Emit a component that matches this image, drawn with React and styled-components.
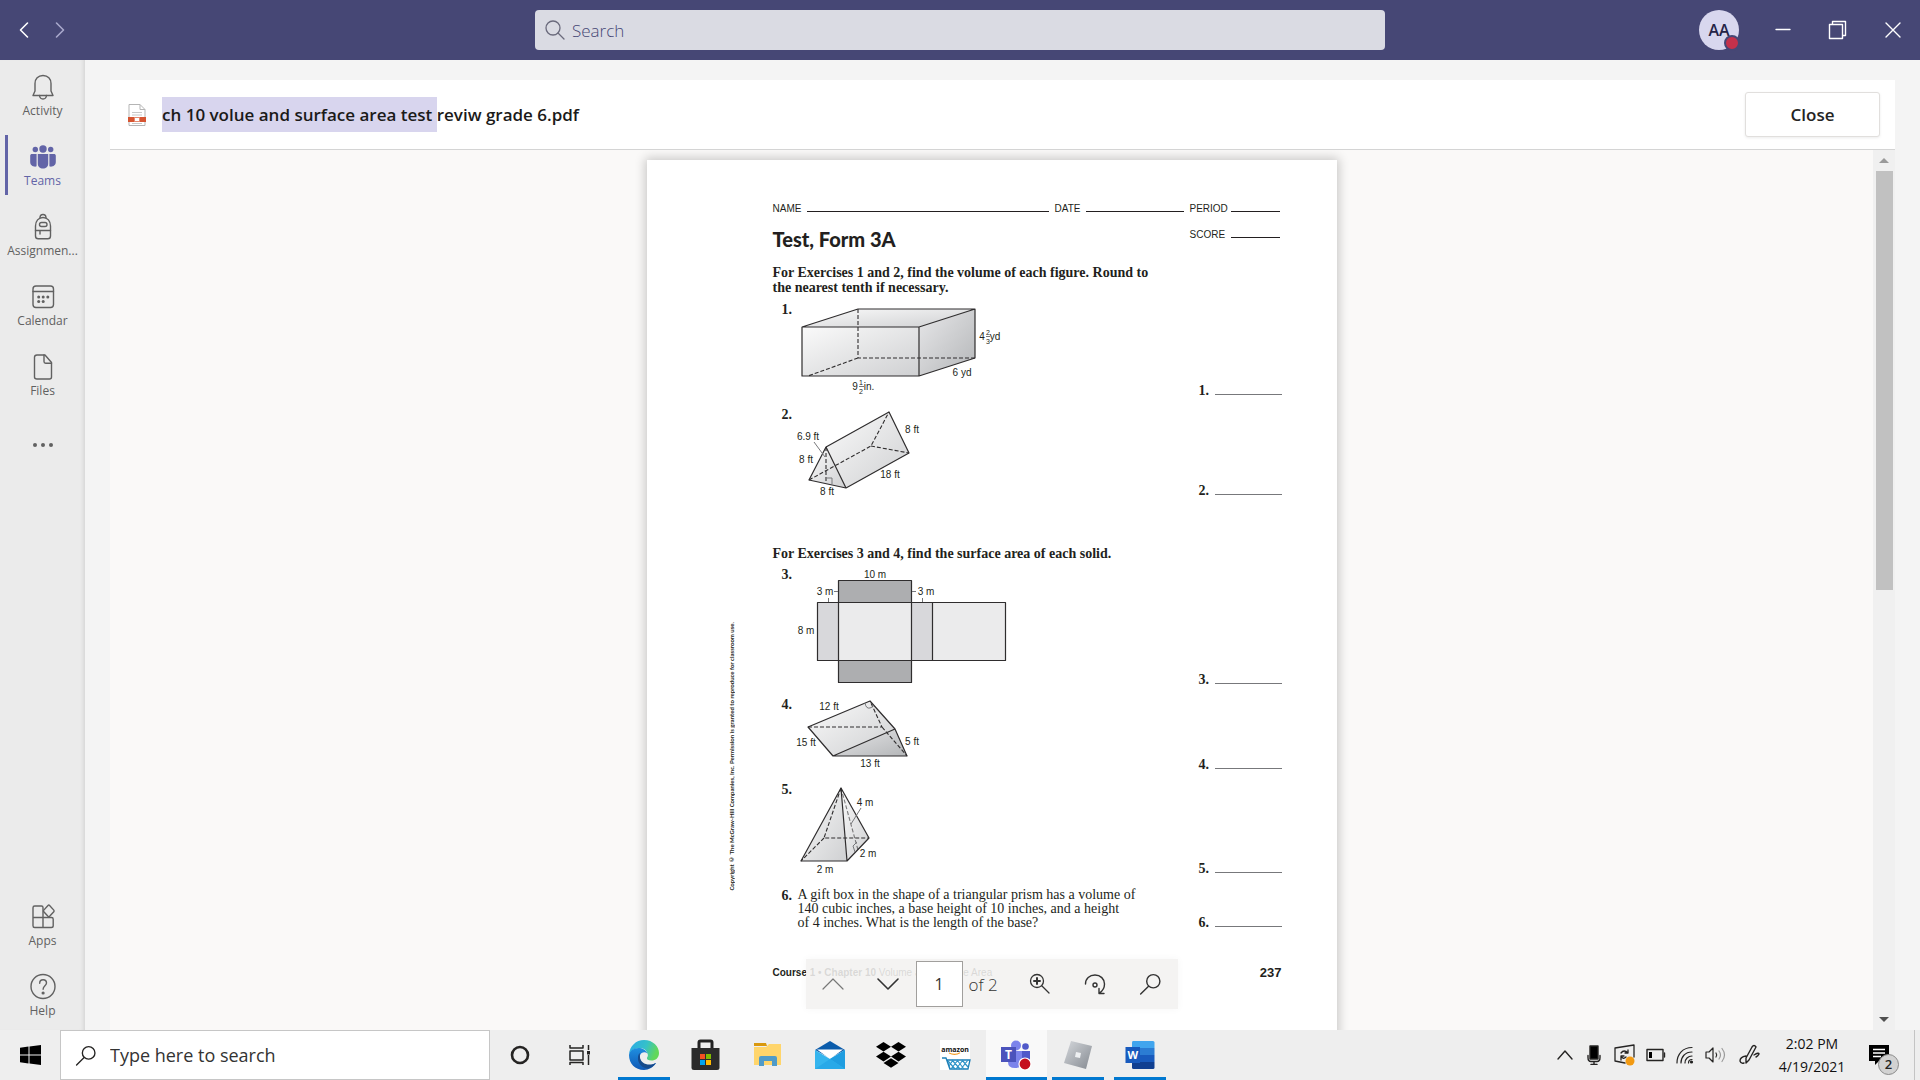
import React from "react";
import styled, { createGlobalStyle } from "styled-components";

const UI = `"Open Sans", "Noto Sans", sans-serif`;
const SERIF = `"Liberation Serif", serif`;
const SANS = `"Liberation Sans", sans-serif`;
const LATO = `Lato, "Liberation Sans", sans-serif`;

const Global = createGlobalStyle`
  *, *::before, *::after { box-sizing: border-box; }
  html, body, #root { height: 100%; }
  body { margin: 0; overflow: hidden; font-family: ${UI}; color: #252423; }
  button, input { font-family: inherit; color: inherit; }
  button { background: none; border: 0; padding: 0; margin: 0; }
  svg { display: block; flex: none; }
`;

const Screen = styled.div`
  height: 100vh;
  display: grid;
  grid-template-rows: 60px minmax(0, 1fr) 50px;
`;

/* ---------- title bar ---------- */
const TitleBar = styled.header`
  background: #464775;
  display: grid;
  grid-template-columns: 1fr minmax(200px, 850px) 1fr;
  align-items: center;
`;
const NavArrows = styled.div`
  display: flex;
  gap: 12px;
  padding-left: 12px;
`;
const IconButton = styled.button`
  display: flex;
  align-items: center;
  justify-content: center;
  width: ${(p) => p.$w || 24}px;
  height: ${(p) => p.$h || 32}px;
  color: ${(p) => p.$color || "inherit"};
`;
const TopSearch = styled.label`
  height: 40px;
  border-radius: 4px;
  background: #dadbe3;
  display: flex;
  align-items: center;
  gap: 7px;
  padding: 0 11px 0 10px;
  color: #6a6a7c;
`;
const TopSearchInput = styled.input`
  flex: 1;
  min-width: 0;
  border: 0;
  outline: 0;
  background: transparent;
  font-size: 17px;
  font-weight: 300;
  padding: 0;
  &::placeholder { color: #464775; opacity: 1; }
`;
const WindowTools = styled.div`
  display: flex;
  justify-content: flex-end;
  align-items: center;
  gap: 23px;
  padding-right: 11px;
`;
const Avatar = styled.button`
  position: relative;
  width: 40px;
  height: 40px;
  border-radius: 50%;
  background: #d8d7ee;
  color: #252447;
  font-size: 16px;
  font-weight: 600;
  margin-right: 5px;
`;
const Presence = styled.span`
  position: absolute;
  right: -1px;
  bottom: -1px;
  width: 16px;
  height: 16px;
  border-radius: 50%;
  background: #c4314b;
  border: 2px solid #464775;
`;

/* ---------- middle ---------- */
const Middle = styled.div`
  display: grid;
  grid-template-columns: 85px minmax(0, 1fr);
  min-height: 0;
`;
const Rail = styled.nav`
  background: #ebebeb;
  box-shadow: inset -4px 0 4px -3px #cfcfcf;
  display: flex;
  flex-direction: column;
`;
const RailItem = styled.button`
  position: relative;
  height: 70px;
  width: 100%;
  padding-top: 13px;
  display: flex;
  flex-direction: column;
  align-items: center;
  font-size: 12px;
  line-height: 20px;
  color: ${(p) => (p.$active ? "#6264a7" : "#616161")};
  margin-top: ${(p) => (p.$push ? "auto" : "0")};
  &::before {
    content: "";
    display: ${(p) => (p.$active ? "block" : "none")};
    position: absolute;
    left: 5px;
    top: 5px;
    bottom: 5px;
    width: 3px;
    background: #6264a7;
  }
`;
const More = styled(RailItem)`
  padding-top: 21px;
`;
const Content = styled.main`
  background: #f4f4f4;
  padding: 20px 25px 0;
  display: flex;
  min-height: 0;
`;
const Panel = styled.section`
  flex: 1;
  min-width: 0;
  display: flex;
  flex-direction: column;
  background: #faf9f8;
`;
const FileBar = styled.div`
  height: 70px;
  flex: none;
  background: #fff;
  border-bottom: 1px solid #d4d4d4;
  display: flex;
  align-items: center;
  padding: 0 15px 0 18px;
`;
const FileName = styled.h1`
  margin: 0 auto 0 16px;
  font-size: 17px;
  font-weight: 600;
  line-height: 35px;
  white-space: pre;
  color: #1b1a19;
`;
const Mark = styled.mark`
  display: inline-block;
  background: #d8d5ee;
  color: inherit;
`;
const CloseButton = styled.button`
  width: 135px;
  height: 45px;
  border: 1px solid #e1dfdd;
  border-radius: 3px;
  box-shadow: 0 1px 3px rgba(0, 0, 0, 0.08);
  background: #fff;
  font-size: 17px;
  font-weight: 600;
  color: #252423;
`;
const Viewer = styled.div`
  position: relative;
  flex: 1;
  min-height: 0;
  display: flex;
`;
const Canvas = styled.div`
  flex: 1;
  overflow: hidden;
  display: flex;
  justify-content: center;
  padding-top: 10px;
`;
const Scrollbar = styled.div`
  width: 22px;
  background: #f0f0f0;
  display: flex;
  flex-direction: column;
  align-items: center;
`;
const ScrollArrow = styled.button`
  height: 21px;
  width: 100%;
  flex: none;
  display: flex;
  align-items: center;
  justify-content: center;
`;
const Track = styled.div`
  flex: 1;
  width: 17px;
`;
const Thumb = styled.div`
  height: 50%;
  background: #c1c1c1;
`;

/* ---------- the document ---------- */
const Sheet = styled.article`
  width: 690px;
  min-height: 900px;
  flex: none;
  background: #fff;
  box-shadow: 0 0 10px 2px rgba(0, 0, 0, 0.2);
  display: grid;
  grid-template-columns: 46px 509px;
  padding: 41px 0 0 80px;
  color: #231f20;
  align-items: start;
`;
const Copyright = styled.p`
  margin: 421px 0 0;
  writing-mode: vertical-rl;
  transform: rotate(180deg);
  font: bold 6px/10px ${LATO};
  white-space: nowrap;
  justify-self: start;
`;
const FormRow = styled.div`
  display: flex;
  justify-content: space-between;
  align-items: baseline;
  margin-top: ${(p) => p.$top || 0}px;
  padding-right: 2px;
`;
const Field = styled.span`
  display: flex;
  align-items: baseline;
  justify-content: space-between;
  width: ${(p) => p.$w}px;
  font: 10px/16px ${SANS};
`;
const Blank = styled.span`
  width: ${(p) => p.$w}px;
  height: 1px;
  background: ${(p) => (p.$soft ? "#77787b" : "#231f20")};
`;
const TestTitle = styled.h2`
  margin: 0;
  font: 900 20px/24px ${LATO};
`;
const TitleRow = styled(FormRow)`
  align-items: flex-start;
`;
const Directions = styled.h3`
  margin: ${(p) => p.$top}px 0 0;
  font: bold 14px/15px ${SERIF};
`;
const Exercise = styled.div`
  display: grid;
  grid-template-columns: 25px 1fr 83px;
  margin-top: ${(p) => p.$top}px;
`;
const Num = styled.b`
  font: bold 14px/15px ${SERIF};
  padding-left: ${(p) => p.$pad || 0}px;
`;
const Answer = styled.div`
  align-self: end;
  display: flex;
  align-items: baseline;
  justify-content: space-between;
`;
const Problem = styled.p`
  margin: 0;
  font: 14px/14px ${SERIF};
  white-space: nowrap;
`;
const Figure = styled.svg`
  overflow: visible;
  text { font: 10px ${SANS}; fill: #231f20; text-anchor: middle; }
  .frac { font-size: 7px; }
  .line { fill: none; stroke: #2f2d2e; stroke-width: 1.2; stroke-linejoin: round; }
  .dash { fill: none; stroke: #2f2d2e; stroke-width: 1.1; stroke-dasharray: 4 2; }
  .thin { fill: none; stroke: #77787b; stroke-width: 1; }
`;
const PageFooter = styled.div`
  display: flex;
  justify-content: space-between;
  margin-top: 35px;
  font: bold 10px/15px ${SANS};
`;
const Regular = styled.span`
  font-weight: 400;
`;
const PageNo = styled.span`
  font-size: 13px;
`;

/* ---------- floating pager ---------- */
const Pager = styled.div`
  position: absolute;
  left: calc(50% - 197px);
  bottom: 21px;
  width: 372px;
  height: 50px;
  background: rgba(242, 241, 240, 0.88);
  box-shadow: 0 0 8px rgba(0, 0, 0, 0.04);
  display: flex;
  align-items: center;
  color: #333;
`;
const PageInput = styled.input`
  width: 47px;
  height: 46px;
  margin-right: 6px;
  border: 1px solid #a19f9d;
  background: #fff;
  text-align: center;
  font-size: 16px;
  padding: 0;
`;
const PageCount = styled.span`
  font-size: 17px;
  font-weight: 300;
  width: 43px;
  white-space: nowrap;
`;

/* ---------- task bar ---------- */
const TaskBar = styled.footer`
  background: #eee;
  display: flex;
  align-items: stretch;
`;
const Start = styled(IconButton)`
  width: 60px;
  height: 50px;
`;
const TaskSearch = styled.label`
  width: 430px;
  background: #fff;
  border: 1px solid #c6c6c6;
  display: flex;
  align-items: center;
  gap: 14px;
  padding: 0 14px;
`;
const TaskSearchInput = styled.input`
  flex: 1;
  min-width: 0;
  border: 0;
  outline: 0;
  padding: 0;
  background: transparent;
  font-size: 18px;
  &::placeholder { color: #333; opacity: 1; }
`;
const Task = styled.button`
  width: ${(p) => p.$w || 62}px;
  display: flex;
  align-items: center;
  justify-content: center;
  background: linear-gradient(#0078d0, #0078d0) center bottom / ${(p) => (p.$open ? "52px" : p.$active ? "100%" : "0")} 3px no-repeat,
    ${(p) => (p.$active ? "#f9f9f9" : "transparent")};
`;
const Tray = styled.div`
  margin-left: auto;
  display: flex;
  align-items: center;
`;
const Clock = styled.button`
  width: 88px;
  font-size: 14px;
  line-height: 23px;
  text-align: center;
  color: #111;
`;
const Notices = styled.button`
  position: relative;
  width: 59px;
  height: 50px;
  margin-right: 5px;
  padding-left: 13px;
  display: flex;
  align-items: center;
  border-right: 1px solid #c4c4c4;
`;
const Count = styled.span`
  position: absolute;
  left: 22px;
  top: 24px;
  width: 21px;
  height: 21px;
  border-radius: 50%;
  background: #d2d2d2;
  border: 1px solid #8a8a8a;
  font-size: 13px;
  font-weight: 600;
  line-height: 18px;
  text-align: center;
`;

const Stroke = ({ w = 24, h = 24, sw = 1.4, box, children, ...rest }) => (
  <svg width={w} height={h} viewBox={box || `0 0 ${w} ${h}`} fill="none" stroke="currentColor"
    strokeWidth={sw} strokeLinecap="round" strokeLinejoin="round" aria-hidden="true" {...rest}>
    {children}
  </svg>
);

const railIcons = {
  Activity: (
    <Stroke w={28} h={28}>
      <path d="M14 2.500c-5 0-8 3.500-8 8V18l-2 4.500h20L22 18v-7.500c0-4.500-3-8-8-8z" />
      <path d="M10.500 22.500c.3 2.500 1.500 3.500 3.500 3.500s3.200-1 3.500-3.500" />
    </Stroke>
  ),
  Teams: (
    <svg width="28" height="28" viewBox="0 0 28 28" fill="currentColor" aria-hidden="true">
      <circle cx="14" cy="6" r="3.700" /><circle cx="6.300" cy="6.500" r="2.700" /><circle cx="21.700" cy="6.500" r="2.700" />
      <path d="M8.800 11h10.400v9.500c0 3.200-2.200 5-5.200 5s-5.200-1.800-5.200-5z" />
      <path d="M7.600 11H3c-1 0-1.800.7-1.800 1.700V19c0 3 2.500 5 5.900 4.600.6 0 .5-1 .5-2z" />
      <path d="M20.400 11H25c1 0 1.800.7 1.800 1.700V19c0 3-2.500 5-5.900 4.600-.6 0-.5-1-.5-2z" />
    </svg>
  ),
  "Assignmen...": (
    <Stroke w={28} h={28}>
      <path d="M11 5c0-2 1-3.500 3-3.500S17 3 17 5" />
      <path d="M6.500 13c0-5 3-8.500 7.500-8.500s7.500 3.500 7.500 8.500v10c0 1.700-1 2.800-2.700 2.800H9.200c-1.700 0-2.700-1.100-2.700-2.800z" />
      <rect x="10.500" y="9.500" width="7.500" height="4" rx="2" />
      <path d="M6.500 17.500h15M11 17.500v3.500" />
    </Stroke>
  ),
  Calendar: (
    <Stroke w={28} h={28}>
      <rect x="4" y="3" width="20.500" height="21.500" rx="3" /><path d="M4 8.500h20.500" />
      <g fill="currentColor" stroke="none">
        <circle cx="9.700" cy="14" r="1.500" /><circle cx="14.200" cy="14" r="1.500" /><circle cx="18.800" cy="14" r="1.500" />
        <circle cx="9.700" cy="18.500" r="1.500" /><circle cx="14.200" cy="18.500" r="1.500" />
      </g>
    </Stroke>
  ),
  Files: (
    <Stroke w={28} h={28}>
      <path d="M8 2h8l6.500 7.500V24c0 1.300-.8 2-2 2H8c-1.500 0-2.500-.8-2.500-2V4.200C5.500 2.800 6.500 2 8 2z" />
      <path d="M15 2v6.500c0 1 .6 1.700 1.600 1.700h5.900" />
    </Stroke>
  ),
  Apps: (
    <Stroke w={28} h={28}>
      <path d="M14 14.500V4.500c0-1-.5-1.500-1.500-1.500H5.700C4.700 3 4 3.600 4 4.700v18c0 1 .7 1.800 1.700 1.800h16.600c1.200 0 1.900-.7 1.900-1.800v-6.500c0-1-.7-1.700-1.700-1.700H4M14 14.500v10" />
      <path d="M19 2.500q.8-.8 1.600 0l4.200 4.600q.7.800 0 1.600l-4.200 4.600q-.8.800-1.600 0l-4.200-4.600q-.7-.8 0-1.600z" />
    </Stroke>
  ),
  Help: (
    <Stroke w={28} h={28}>
      <circle cx="14" cy="13.500" r="12" />
      <path d="M10.700 10.300c0-2.200 1.400-3.500 3.400-3.500s3.400 1.300 3.400 3.200c0 2.700-3.400 3-3.400 6.300" />
      <circle cx="14.100" cy="20" r=".9" fill="currentColor" />
    </Stroke>
  ),
};

const EdgeIcon = () => (
  <svg width="32" height="32" viewBox="0 0 32 32" aria-hidden="true">
    <defs>
      <linearGradient id="eg1" x1="0" y1="0" x2="1" y2=".3"><stop offset="0" stopColor="#2aa8e8" /><stop offset=".6" stopColor="#35c1c9" /><stop offset="1" stopColor="#62d85a" /></linearGradient>
      <linearGradient id="eg2" x1="0" y1="0" x2="0" y2="1"><stop offset="0" stopColor="#1f8fe0" /><stop offset="1" stopColor="#0f58b5" /></linearGradient>
    </defs>
    <path d="M1 16C1.500 7 8 1 16 1c9 0 15 6.500 15 13 0 5-3.500 7.500-7.500 7.500-3.500 0-5-1.500-4.500-2.800 1.200-1.500 1-3 .5-4.200C18 10 14 8.500 10.500 9 5 9.700 1.500 13 1 16z" fill="url(#eg1)" />
    <path d="M1 16c.5-4 4.500-7 9.500-7 4 0 7.500 2 9 5.500-2.500-2.200-6.500-1.500-7.500 2-1.200 6 5 11.500 11 9.500 3-1 4.500-2.500 5-2-2.500 4-7 7-12 7C7 31 1 24.500 1 16z" fill="url(#eg2)" />
    <path d="M11.500 14c-3 4-2 12 5.500 15 4 1.500 8-1 11-5-8 4-15.500 0-16-5.500-.2-2 0-3.500-.5-4.500z" fill="#164a8c" />
  </svg>
);
const StoreIcon = () => (
  <svg width="32" height="32" viewBox="0 0 32 32" aria-hidden="true">
    <path d="M9 10V3.500Q9 2 10.500 2h10Q22 2 22 3.500V10" fill="none" stroke="#222" strokeWidth="3" />
    <path d="M1.500 9h28v19.500q0 2.500-2.500 2.500H4q-2.500 0-2.500-2.500z" fill="#2b2b2b" />
    <path d="M10 15h5v5h-5z" fill="#f25022" /><path d="M16 15h5v5h-5z" fill="#7fba00" />
    <path d="M10 21h5v5h-5z" fill="#00a4ef" /><path d="M16 21h5v5h-5z" fill="#ffb900" />
  </svg>
);
const FolderIcon = () => (
  <svg width="32" height="32" viewBox="0 0 32 32" aria-hidden="true">
    <path d="M3 4h12l1 3H3z" fill="#d9980e" /><path d="M3 8h12l3-3h12v21H3z" fill="#ffd56b" />
    <path d="M8 27v-8q0-2 2-2h14q2 0 2 2v8h-5v-5h-8v5z" fill="#4f9bc9" />
  </svg>
);
const MailIcon = () => (
  <svg width="32" height="32" viewBox="0 0 32 32" aria-hidden="true">
    <path d="M1 11 16 2l15 9-15 8z" fill="#0b5cab" /><path d="M3 10.500h26L16 20z" fill="#fff" />
    <path d="M1 11l15 9 15-9v19H1z" fill="#35b5ee" /><path d="M31 11v19L16 20z" fill="#1f9de0" /><path d="M1 30l15-10 15 10z" fill="#28a9e8" />
  </svg>
);
const DropboxIcon = () => (
  <svg width="32" height="28" viewBox="0 0 32 28" aria-hidden="true">
    <path d="M8.500 1 16 5.800 8.500 10.600 1 5.800zM23.500 1 31 5.800l-7.500 4.800L16 5.800zM8.500 10.800l7.500 4.800-7.500 4.800L1 15.600zM23.500 10.800l7.500 4.800-7.500 4.800-7.500-4.800zM16 17.200l7.500 4.800L16 26.800 8.500 22z" />
  </svg>
);
const AmazonIcon = () => (
  <svg width="32" height="32" viewBox="0 0 32 32" aria-hidden="true">
    <path d="M1 1h30v30H1z" fill="#fff" />
    <text x="16" y="12.500" textAnchor="middle" fontFamily="Open Sans, sans-serif" fontWeight="700" fontSize="7" fill="#111">amazon</text>
    <path d="M10 14q6 3 11-.3" fill="none" stroke="#f59b23" strokeWidth="1.200" />
    <path d="M3 19h4l4 11.500M8 21h23l-2 9H11z" fill="none" stroke="#1b7fb8" strokeWidth="1.300" />
    <path d="M9 22l7 8M13 21l8 9M18 21l7 9M23 21l6 7M14 21l-4 6M19 21l-7 9M24 21l-7 9M29 21l-7 9" stroke="#2d93c8" strokeWidth="1.200" />
  </svg>
);
const TeamsIcon = () => (
  <svg width="34" height="32" viewBox="2 0 34 32" aria-hidden="true">
    <circle cx="18" cy="6.500" r="5" fill="#7b83eb" /><circle cx="27.500" cy="7.500" r="3.300" fill="#5059c9" />
    <path d="M22 12h10v9q0 5-5 5-5 0-5-5z" fill="#5059c9" /><path d="M10 12h14v11q0 6-7 6-7 0-7-6z" fill="#7b83eb" />
    <path d="M3 8h15v15H3z" fill="#4b53bc" />
    <text x="10.500" y="20" textAnchor="middle" fontFamily="Open Sans, sans-serif" fontWeight="700" fontSize="12" fill="#fff">T</text>
    <circle cx="27" cy="25" r="6" fill="#c50f1f" stroke="#fff" strokeWidth="1.200" />
  </svg>
);
const RobloxIcon = () => (
  <svg width="32" height="32" viewBox="0 0 32 32" aria-hidden="true">
    <defs><linearGradient id="rb" x1="0" y1="0" x2="1" y2="1"><stop offset="0" stopColor="#d5d8dc" /><stop offset="1" stopColor="#858a91" /></linearGradient></defs>
    <path d="M9 2l21 5-6 23-22-6z" fill="url(#rb)" /><path d="M14 13l5 1-1 5-5-1z" fill="#eef0f2" />
  </svg>
);
const WordIcon = () => (
  <svg width="32" height="32" viewBox="0 0 32 32" aria-hidden="true">
    <path d="M9 2h20q1.500 0 1.500 1.500V9H8V3.500Q8 2 9 2z" fill="#41a5ee" /><path d="M8 9h22.500v7H8z" fill="#2b7cd3" />
    <path d="M8 16h22.500v7H8z" fill="#185abd" /><path d="M8 23h22.500v5.500Q30.500 30 29 30H9.500Q8 30 8 28.500z" fill="#103f91" />
    <path d="M1.500 8H16v16H1.500z" fill="#185abd" />
    <text x="8.700" y="20" textAnchor="middle" fontFamily="Open Sans, sans-serif" fontWeight="700" fontSize="11" fill="#fff">W</text>
  </svg>
);

const Magnifier = ({ size = 20, flip }) => (
  <Stroke w={size} h={size} box="0 0 20 20" sw={1.3}>
    {flip ? <><circle cx="13" cy="7.500" r="6" /><path d="M8.700 12 1.500 19" /></> : <><circle cx="8" cy="8" r="7" /><path d="m13 13 6 6" /></>}
  </Stroke>
);

const ExerciseRow = ({ n, top, children }) => (
  <Exercise $top={top}>
    <Num $pad={9}>{n}.</Num>
    {children}
    <Answer><Num>{n}.</Num><Blank $w={67} $soft /></Answer>
  </Exercise>
);

const Worksheet = () => (
  <Sheet>
    <Copyright>Copyright © The McGraw-Hill Companies, Inc. Permission is granted to reproduce for classroom use.</Copyright>
    <div>
      <FormRow>
        <Field $w={276}>NAME<Blank $w={242} /></Field>
        <Field $w={129}>DATE<Blank $w={98} /></Field>
        <Field $w={90}>PERIOD<Blank $w={49} /></Field>
      </FormRow>
      <TitleRow $top={10}>
        <TestTitle>Test, Form 3A</TestTitle>
        <Field $w={90}>SCORE<Blank $w={49} /></Field>
      </TitleRow>
      <Directions $top={14}>For Exercises 1 and 2, find the volume of each figure. Round to<br />the nearest tenth if necessary.</Directions>

      <ExerciseRow n={1} top={7}>
        <Figure width="212" height="96" viewBox="798 302 212 96">
          <defs>
            <linearGradient id="f1" x1="0" y1="0" x2="1" y2="1"><stop offset="0" stopColor="#fafafa" /><stop offset="1" stopColor="#cfd0d2" /></linearGradient>
            <linearGradient id="f2" x1="0" y1="0" x2="1" y2="1"><stop offset="0" stopColor="#e8e8ea" /><stop offset="1" stopColor="#b4b6b8" /></linearGradient>
          </defs>
          <path d="M802 327 858 309H975L919 327z" fill="url(#f1)" /><path d="M802 327H919V376H802z" fill="url(#f1)" />
          <path d="M919 327 975 309V358L919 376z" fill="url(#f2)" />
          <path className="line" d="M802 327H919V376H802zM802 327 858 309H975L919 327M975 309V358L919 376" />
          <path className="dash" d="M858 309V358H975M858 358 808 376" />
          <text x="855" y="390">9</text><text className="frac" x="861" y="385">1</text><text className="frac" x="861" y="394">2</text>
          <path className="thin" d="M859 386.500h5" /><text x="869" y="390">in.</text>
          <text x="962" y="376">6 yd</text>
          <text x="982" y="340">4</text><text className="frac" x="988" y="335">2</text><text className="frac" x="988" y="344">3</text>
          <path className="thin" d="M986 336.500h4" /><text x="995" y="340">yd</text>
        </Figure>
      </ExerciseRow>

      <ExerciseRow n={2} top={9}>
        <Figure width="212" height="91" viewBox="798 407 212 91">
          <path d="M826 447 889 412 909 453 846 488z" fill="url(#f1)" /><path d="M826 447 809 480 846 488z" fill="url(#f1)" />
          <path className="line" d="M826 447 809 480 846 488zM826 447 889 412 909 453 846 488" />
          <path className="dash" d="M809 480 871 446 889 412M871 446 909 453M826 447V483" />
          <path className="thin" d="M814 442 825 457M827 478h5v6" />
          <text x="808" y="440">6.9 ft</text><text x="806" y="463">8 ft</text><text x="912" y="433">8 ft</text>
          <text x="890" y="478">18 ft</text><text x="827" y="495">8 ft</text>
        </Figure>
      </ExerciseRow>

      <Directions $top={48}>For Exercises 3 and 4, find the surface area of each solid.</Directions>

      <ExerciseRow n={3} top={6}>
        <Figure width="212" height="120" viewBox="798 567 212 120">
          <path d="M838.500 580.500h73v102h-73z" fill="#adaeb0" />
          <path d="M817.500 602.500h115v58h-115z" fill="#d8d8db" />
          <path d="M838.500 602.500h73v58h-73zM932.500 602.500h73v58h-73z" fill="#ebebec" />
          <path className="line" d="M838.500 580.500h73v102h-73zM817.500 602.500h188v58h-188zM932.500 602.500v58" />
          <path className="thin" d="M834 591.500h4M912 591.500h4M828.500 598v4M922.500 598v4" />
          <text x="875" y="578">10 m</text><text x="825" y="595">3 m</text><text x="926" y="595">3 m</text><text x="806" y="634">8 m</text>
        </Figure>
      </ExerciseRow>

      <ExerciseRow n={4} top={10}>
        <Figure width="212" height="75" viewBox="798 697 212 75">
          <path d="M870 701 808 727 833 756 895 729z" fill="url(#f1)" /><path d="M895 729 907 756H833z" fill="url(#f2)" />
          <path className="line" d="M870 701 808 727 833 756H907L895 729zM833 756 895 729" />
          <path className="dash" d="M808 727H882L870 701M882 727 907 756" />
          <path className="thin" d="M865 703q1 6 5 5t3-3" />
          <text x="829" y="710">12 ft</text><text x="806" y="746">15 ft</text><text x="912" y="745">5 ft</text><text x="870" y="767">13 ft</text>
        </Figure>
      </ExerciseRow>

      <ExerciseRow n={5} top={10}>
        <Figure width="212" height="94" viewBox="798 782 212 94">
          <path d="M841 788 801 861H847z" fill="url(#f1)" /><path d="M841 788 847 861 869 838z" fill="url(#f1)" />
          <path className="line" d="M841 788 801 861H847L869 838zM841 788 847 861" />
          <path className="dash" d="M841 788 824 838H869M824 838 801 861" />
          <path className="dash" d="M841 788 858 850" opacity=".6" />
          <path className="thin" d="M861 808 851 824M855 852l-2-6 4-4" />
          <text x="865" y="806">4 m</text><text x="868" y="857">2 m</text><text x="825" y="873">2 m</text>
        </Figure>
      </ExerciseRow>

      <ExerciseRow n={6} top={12}>
        <Problem>A gift box in the shape of a triangular prism has a volume of<br />140 cubic inches, a base height of 10 inches, and a height<br />of 4 inches. What is the length of the base?</Problem>
      </ExerciseRow>

      <PageFooter>
        <span>Course 1 • Chapter 10 <Regular>Volume and Surface Area</Regular></span>
        <PageNo>237</PageNo>
      </PageFooter>
    </div>
  </Sheet>
);

export default function App() {
  return (
    <Screen>
      <Global />
      <TitleBar>
        <NavArrows>
          <IconButton aria-label="Back" $color="#fff"><Stroke w={10} h={18} sw={1.6}><path d="M8.500 2 1.500 9l7 7" /></Stroke></IconButton>
          <IconButton aria-label="Forward" $color="#a9a9cc"><Stroke w={10} h={18} sw={1.6}><path d="m1.500 2 7 7-7 7" /></Stroke></IconButton>
        </NavArrows>
        <TopSearch>
          <Magnifier />
          <TopSearchInput aria-label="Search" placeholder="Search" />
        </TopSearch>
        <WindowTools>
          <Avatar aria-label="Account">AA<Presence /></Avatar>
          <IconButton aria-label="Minimize" $w={32} $color="#fff"><Stroke w={16} h={16}><path d="M1 7.500h14" /></Stroke></IconButton>
          <IconButton aria-label="Restore" $w={32} $color="#fff"><Stroke w={20} h={20}><path d="M1.500 4.500h13v14h-13zM4.500 4V1.500h13v14H15" /></Stroke></IconButton>
          <IconButton aria-label="Close window" $w={32} $color="#fff"><Stroke w={16} h={16}><path d="m1 1 14 14M15 1 1 15" /></Stroke></IconButton>
        </WindowTools>
      </TitleBar>

      <Middle>
        <Rail>
          {["Activity", "Teams", "Assignmen...", "Calendar", "Files"].map((name) => (
            <RailItem key={name} $active={name === "Teams"}>{railIcons[name]}{name}</RailItem>
          ))}
          <More aria-label="More apps">
            <svg width="28" height="28" viewBox="0 0 28 28" fill="currentColor" aria-hidden="true"><circle cx="6" cy="14" r="2" /><circle cx="14" cy="14" r="2" /><circle cx="22" cy="14" r="2" /></svg>
          </More>
          <RailItem $push>{railIcons.Apps}Apps</RailItem>
          <RailItem>{railIcons.Help}Help</RailItem>
        </Rail>

        <Content>
          <Panel>
            <FileBar>
              <svg width="18" height="22" viewBox="0 0 18 22" aria-hidden="true">
                <path d="M1 .5h11l5 5v16H1z" fill="#fff" stroke="#b5b5b5" /><path d="M12 .5v5h5" fill="none" stroke="#b5b5b5" />
                <path d="M4 8.500h10M4 11h10M4 19.500h10" stroke="#c8c8c8" /><path d="M0 13h18v5H0z" fill="#d65532" />
                <path d="M6.500 13.500h5v4h-5z" fill="#fff" stroke="#e58a70" />
              </svg>
              <FileName><Mark>ch 10 volue and surface area test </Mark>reviw grade 6.pdf</FileName>
              <CloseButton>Close</CloseButton>
            </FileBar>
            <Viewer>
              <Canvas><Worksheet /></Canvas>
              <Scrollbar>
                <ScrollArrow aria-label="Scroll up"><svg width="10" height="5" viewBox="0 0 10 5"><path d="M0 5 5 0l5 5z" fill="#9a9a9a" /></svg></ScrollArrow>
                <Track><Thumb /></Track>
                <ScrollArrow aria-label="Scroll down"><svg width="10" height="5" viewBox="0 0 10 5"><path d="M0 0h10L5 5z" fill="#505050" /></svg></ScrollArrow>
              </Scrollbar>
              <Pager>
                <IconButton aria-label="Previous page" $w={55} $color="#777"><Stroke w={22} h={12} sw={1.2}><path d="m1 11 10-10 10 10" /></Stroke></IconButton>
                <IconButton aria-label="Next page" $w={55}><Stroke w={22} h={12} sw={1.6}><path d="m1 1 10 10L21 1" /></Stroke></IconButton>
                <PageInput aria-label="Page" defaultValue="1" />
                <PageCount>of 2</PageCount>
                <IconButton aria-label="Zoom" $w={56}><Stroke w={22} h={22} sw={1.3}><circle cx="8" cy="8" r="6.500" /><path d="m13 13 7 7" /><path d="M8 5v6M5 8h6" strokeWidth="2" /></Stroke></IconButton>
                <IconButton aria-label="Rotate" $w={55}><Stroke w={22} h={22} sw={1.4}><path d="M1.500 11C1.500 5.500 5.500 2 11 2s9.500 4 9.500 9c0 4-2 7-5 9M15 15.500V20.500h5" /><circle cx="11" cy="12" r="2" /></Stroke></IconButton>
                <IconButton aria-label="Find" $w={55}><Magnifier size={22} flip /></IconButton>
              </Pager>
            </Viewer>
          </Panel>
        </Content>
      </Middle>

      <TaskBar>
        <Start aria-label="Start"><svg width="21" height="20" viewBox="0 0 21 20"><path d="M0 2.800 8.500 1.600v8H0zM9.500 1.500 21 0v9.600H9.500zM0 10.500h8.500v8L0 17.300zM9.500 10.500H21V20L9.500 18.500z" /></svg></Start>
        <TaskSearch>
          <Magnifier size={21} flip />
          <TaskSearchInput aria-label="Type here to search" placeholder="Type here to search" />
        </TaskSearch>
        <Task aria-label="Cortana" $w={60}><Stroke w={20} h={20} sw={2.600}><circle cx="10" cy="10" r="8" /></Stroke></Task>
        <Task aria-label="Task view" $w={60}><Stroke w={22} h={20} sw={1.500} strokeLinecap="butt"><path d="M1 6h13v9H1zM1 0v3h13V0M1 20v-2.500h13V20M19.500 0v5M19.500 10v10" /><path d="M19.500 6v3.500" strokeWidth="3" /></Stroke></Task>
        <Task aria-label="Microsoft Edge" $w={68} $open><EdgeIcon /></Task>
        <Task aria-label="Microsoft Store" $w={55}><StoreIcon /></Task>
        <Task aria-label="File Explorer" $w={68}><FolderIcon /></Task>
        <Task aria-label="Mail" $w={58}><MailIcon /></Task>
        <Task aria-label="Dropbox" $w={64}><DropboxIcon /></Task>
        <Task aria-label="Amazon" $w={63}><AmazonIcon /></Task>
        <Task aria-label="Microsoft Teams" $w={61} $active><TeamsIcon /></Task>
        <Task aria-label="Roblox" $open><RobloxIcon /></Task>
        <Task aria-label="Word" $open><WordIcon /></Task>
        <Tray>
          <IconButton aria-label="Hidden icons" $w={30}><Stroke w={16} h={10}><path d="m1 9 7-8 7 8" /></Stroke></IconButton>
          <IconButton aria-label="Microphone" $w={28}><Stroke w={14} h={20}><rect x="3" y="1" width="8" height="13" fill="#000" /><path d="M1 10.500v2q0 4 3 4h6q3 0 3-4v-2M7 17v2.500M4 19.500h6" /></Stroke></IconButton>
          <IconButton aria-label="Updates" $w={34}><Stroke w={22} h={22} sw={1.300}><path d="M11 19 1 17V4l19-3v12M7 9q3-4 7 0V6M14 9h-3M12 13q-3 3-5-1v4M7 12h3" /><circle cx="16" cy="17" r="4.500" fill="#f29a12" stroke="none" /></Stroke></IconButton>
          <IconButton aria-label="Battery" $w={28}><Stroke w={20} h={14}><path d="M1 1.500h16v11H1z" /><path d="M18.500 5v4" /><path d="M3 4h3v6H3z" fill="#000" stroke="none" /></Stroke></IconButton>
          <IconButton aria-label="Wi-Fi" $w={30}><Stroke w={18} h={18} sw={1.200}><path d="M1 17C1 8 7 1.500 16 1.500M5 17C5 11 9 6 16 6M9 17c0-4 3-7 7-7M12.500 17c0-2 1.500-3.500 3.500-3.500" /><circle cx="15.500" cy="16" r="1" fill="#000" /></Stroke></IconButton>
          <IconButton aria-label="Volume" $w={32}><Stroke w={22} h={18} sw={1.200}><path d="M1 6h3l4-4v14l-4-4H1zM11 7q1.500 2 0 4" /><path d="M14 5q3 4 0 8M17 2.500q5 6.500 0 13" stroke="#9a9a9a" /></Stroke></IconButton>
          <IconButton aria-label="Pen" $w={36}><Stroke w={22} h={22}><path d="M7 19 7 14 13 3q2-3 4 0l-7 13zM7 12q-6 1-6 5 1 3 4 2M15 11q5-3 5-1-1 2-3 3" /></Stroke></IconButton>
          <Clock>2:02 PM<br />4/19/2021</Clock>
          <Notices aria-label="2 notifications">
            <svg width="20" height="20" viewBox="0 0 20 20"><path d="M0 0h20v16H10l-4 4v-4H0z" /><path d="M4 4.500h12M4 8h12M4 11.500h8" stroke="#fff" strokeWidth="1.300" /></svg>
            <Count>2</Count>
          </Notices>
        </Tray>
      </TaskBar>
    </Screen>
  );
}
